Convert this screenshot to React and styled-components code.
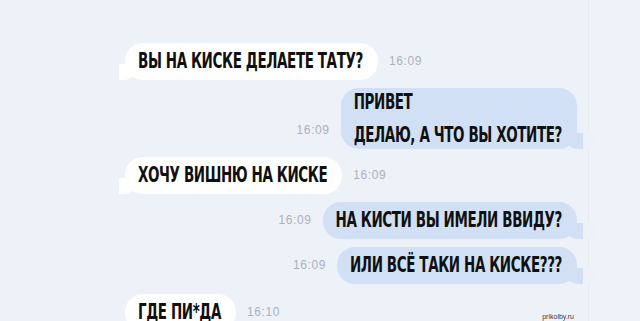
import React from "react";
import styled, { createGlobalStyle, css } from "styled-components";

const PAGE_BG = "#edf1f8";
const OUT_BG = "#d1e0f5";
const IN_BG = "#ffffff";

const Global = createGlobalStyle`
  html, body {
    margin: 0;
    padding: 0;
    background: ${PAGE_BG};
    overflow: hidden;
  }
  #root { height: 321px; }
`;

const Screen = styled.div`
  position: relative;
  display: grid;
  grid-template-columns: 588px 1fr;
  height: 321px;
  overflow: hidden;
`;

const ChatPane = styled.div`
  display: flex;
  flex-direction: column;
  gap: 8px;
  padding: 43px 11px 0 125px;
  background: ${PAGE_BG};
`;

const SidePane = styled.div`
  background: #eff2f8;
  border-left: 1px solid #e4e8ef;
`;

const Row = styled.div`
  display: flex;
  align-items: flex-end;
  gap: 11px;
  justify-content: ${(p) => (p.$out ? "flex-end" : "flex-start")};
  margin-top: ${(p) => p.$shift || 0}px;
`;

const inTail = css`
  &::before {
    content: "";
    position: absolute;
    bottom: 0;
    left: -6px;
    width: 18px;
    height: 16px;
    background: ${IN_BG};
    border-bottom-right-radius: 14px 12px;
  }
  &::after {
    content: "";
    position: absolute;
    bottom: 0;
    left: -20px;
    width: 14px;
    height: 17px;
    background: ${PAGE_BG};
    border-bottom-right-radius: 8px;
  }
`;

const outTail = css`
  &::before {
    content: "";
    position: absolute;
    bottom: 0;
    right: -6px;
    width: 18px;
    height: 16px;
    background: ${OUT_BG};
    border-bottom-left-radius: 14px 12px;
  }
  &::after {
    content: "";
    position: absolute;
    bottom: 0;
    right: -20px;
    width: 14px;
    height: 17px;
    background: ${PAGE_BG};
    border-bottom-left-radius: 8px;
  }
`;

const Bubble = styled.div`
  position: relative;
  display: flex;
  flex-direction: column;
  gap: ${(p) => (p.$multi ? "5px" : "0")};
  padding: 0 15px 0 13px;
  border-radius: 18px;
  background: ${(p) => (p.$out ? OUT_BG : IN_BG)};
  line-height: ${(p) => (p.$multi ? "28px" : "37px")};
  ${(p) => (p.$tail ? (p.$out ? outTail : inTail) : "")}
`;

const Line = styled.span`
  position: relative;
  z-index: 1;
  display: block;
  font-family: "Liberation Sans Narrow", "DejaVu Sans Condensed", "Liberation Sans", sans-serif;
  font-weight: 700;
  font-size: 15px;
  letter-spacing: -0.4px;
  color: #101010;
  white-space: nowrap;
  transform: scaleY(1.47);
`;

const Time = styled.span`
  font-family: "Liberation Sans", Arial, sans-serif;
  font-size: 12px;
  letter-spacing: 0.6px;
  color: #aab2c0;
  line-height: 12px;
  margin-bottom: 13px;
`;

const Watermark = styled.span`
  position: absolute;
  right: 66px;
  bottom: 0;
  font-family: "Liberation Sans", Arial, sans-serif;
  font-size: 7px;
  color: #3a3a3a;
  line-height: 8px;
`;

const messages = [
  { out: false, time: "16:09", lines: ["ВЫ НА КИСКЕ ДЕЛАЕТЕ ТАТУ?"], tail: true },
  { out: true, time: "16:09", lines: ["ПРИВЕТ", "ДЕЛАЮ, А ЧТО ВЫ ХОТИТЕ?"], tail: true },
  { out: false, time: "16:09", lines: ["ХОЧУ ВИШНЮ НА КИСКЕ"], tail: true },
  { out: true, time: "16:09", lines: ["НА КИСТИ ВЫ ИМЕЛИ ВВИДУ?"], tail: true },
  { out: true, time: "16:09", lines: ["ИЛИ ВСЁ ТАКИ НА КИСКЕ???"], tail: true },
  { out: false, time: "16:10", lines: ["ГДЕ ПИ*ДА"], tail: false, shift: 2 },
];

function Message({ m }) {
  const bubble = (
    <Bubble $out={m.out} $tail={m.tail} $multi={m.lines.length > 1}>
      {m.lines.map((l, i) => (
        <Line key={i}>{l}</Line>
      ))}
    </Bubble>
  );
  return (
    <Row $out={m.out} $shift={m.shift}>
      {m.out ? (
        <>
          <Time>{m.time}</Time>
          {bubble}
        </>
      ) : (
        <>
          {bubble}
          <Time>{m.time}</Time>
        </>
      )}
    </Row>
  );
}

export default function App() {
  return (
    <>
      <Global />
      <Screen>
        <ChatPane>
          {messages.map((m, i) => (
            <Message key={i} m={m} />
          ))}
        </ChatPane>
        <SidePane />
        <Watermark>prikolby.ru</Watermark>
      </Screen>
    </>
  );
}
